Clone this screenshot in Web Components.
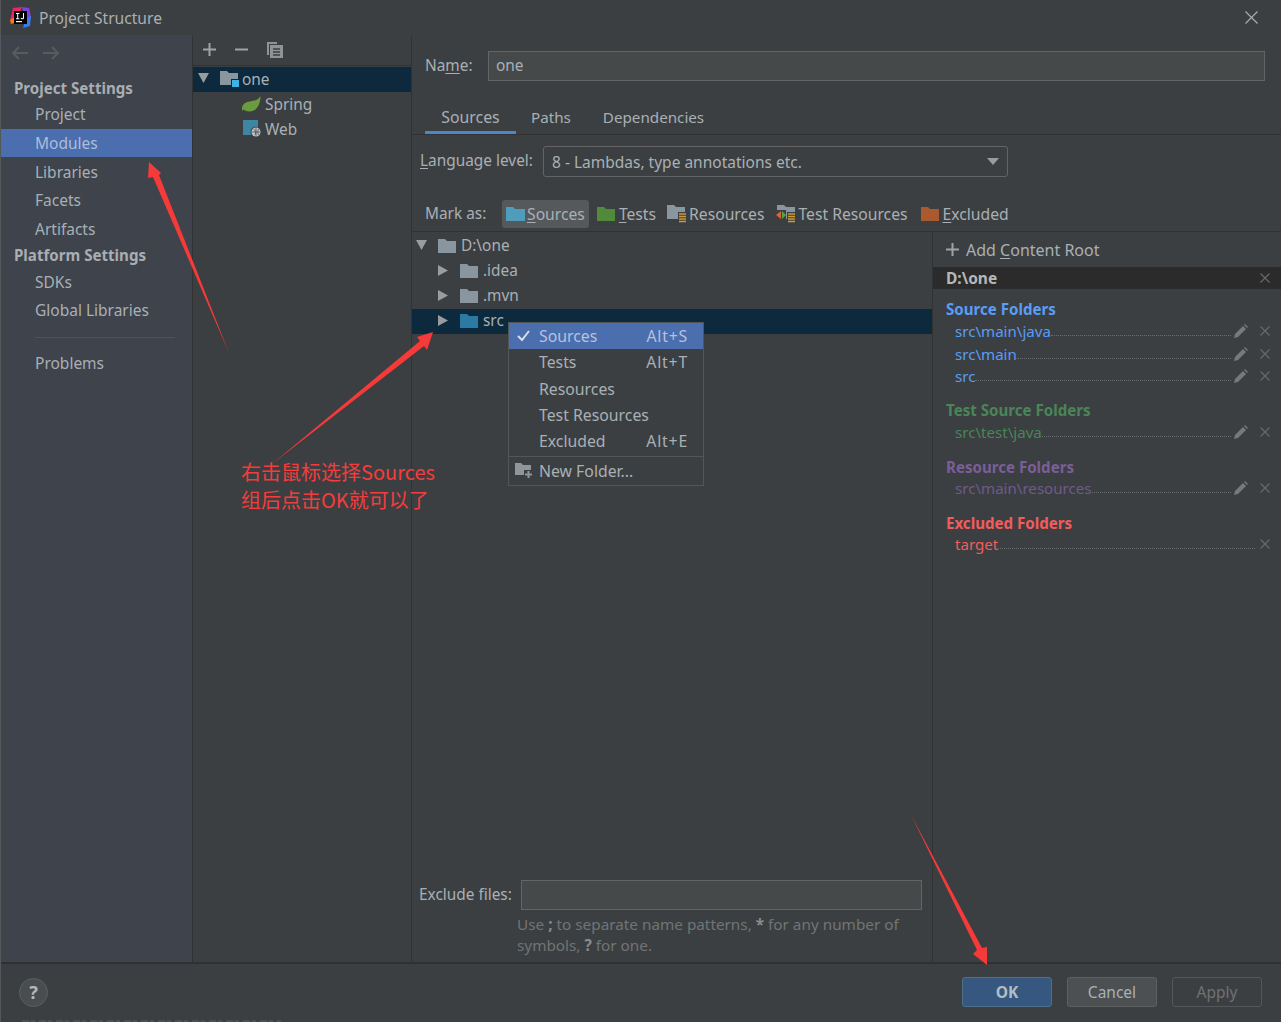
<!DOCTYPE html>
<html lang="zh"><head><meta charset="utf-8"><title>Project Structure</title>
<style>
html,body{margin:0;padding:0;background:#3c3f41;}
body{font-family:"Noto Sans","Noto Sans CJK SC",sans-serif;font-size:15.5px;color:#a9b0b5;overflow:hidden}
</style></head><body>
<ps-dialog>
  <ps-titlebar slot="title">Project Structure</ps-titlebar>

  <ps-sidebar slot="side">
    <ps-nav kind="head" style="padding-top:2px">Project Settings</ps-nav>
    <ps-nav h="29" style="padding-bottom:2px">Project</ps-nav>
    <ps-nav selected h="28">Modules</ps-nav>
    <ps-nav style="padding-top:1px">Libraries</ps-nav>
    <ps-nav>Facets</ps-nav>
    <ps-nav style="padding-top:1px">Artifacts</ps-nav>
    <ps-nav kind="head" h="25">Platform Settings</ps-nav>
    <ps-nav>SDKs</ps-nav>
    <ps-nav>Global Libraries</ps-nav>
    <ps-rule></ps-rule>
    <ps-nav style="padding-bottom:2px">Problems</ps-nav>
  </ps-sidebar>

  <ps-modules slot="modules">
    <ps-row indent="5" open selected icon="module" gap="3" lift="0">one</ps-row>
    <ps-row indent="49" icon="spring" gap="4" noarrow lift="0">Spring</ps-row>
    <ps-row indent="50" icon="web" gap="3" noarrow lift="0">Web</ps-row>
  </ps-modules>

  <ps-detail slot="detail">
    <ps-row slot="tree" indent="4" open icon="gray" lift="2">D:\one</ps-row>
    <ps-row slot="tree" indent="26" icon="gray" lift="2">.idea</ps-row>
    <ps-row slot="tree" indent="26" icon="gray" lift="2">.mvn</ps-row>
    <ps-row slot="tree" indent="26" selected icon="blue" lift="2">src</ps-row>

    <ps-group slot="roots" name="Source Folders" color="#589df6" top="9" pad="0">
      <ps-path editable color="#589df6">src\main\java</ps-path>
      <ps-path editable color="#589df6">src\main</ps-path>
      <ps-path editable color="#589df6">src</ps-path>
    </ps-group>
    <ps-group slot="roots" name="Test Source Folders" color="#4a8559" top="11" pad="0">
      <ps-path editable color="#4a8559">src\test\java</ps-path>
    </ps-group>
    <ps-group slot="roots" name="Resource Folders" color="#7a5e99" top="12" pad="2">
      <ps-path editable color="#6e5a8c">src\main\resources</ps-path>
    </ps-group>
    <ps-group slot="roots" name="Excluded Folders" color="#f25c5c" top="11" pad="2">
      <ps-path color="#f25c5c">target</ps-path>
    </ps-group>
  </ps-detail>

  <ps-footer slot="footer"></ps-footer>

  <ps-menu slot="overlay"></ps-menu>
  <ps-notes slot="overlay"></ps-notes>
</ps-dialog>

<script>
const ICONS = {
  gray:'<svg width="18" height="14" viewBox="0 0 18 14"><path d="M0 0h7l2 2h9v12H0z" fill="#8a969f"/></svg>',
  blue:'<svg width="18" height="14" viewBox="0 0 18 14"><path d="M0 0h7l2 2h9v12H0z" fill="#2a7aa3"/></svg>',
  module:'<svg width="19" height="16" viewBox="0 0 19 16"><path d="M0 0h7l2 2h9v12H0z" fill="#8a969f"/><rect x="11" y="8" width="8" height="8" fill="#0d293e"/><rect x="12" y="9" width="7" height="7" fill="#3cb4e6"/></svg>',
  spring:'<svg width="19" height="16" viewBox="0 0 19 16"><path d="M18.500 0C18.500 8 15 15.500 7.500 15.500 5 15.500 3 14.800 1.500 13.500L0 15 0 12.500C-.2 6 8 5.500 12.500 4.500 15 4 17 2.500 18.500 0z" fill="#6a9c3f"/></svg>',
  web:'<svg width="19" height="18" viewBox="0 0 19 18"><rect x="0" y="0" width="15" height="15" fill="#3f86a5"/><circle cx="13" cy="12" r="5.500" fill="#3c3f41"/><circle cx="13" cy="12" r="4.500" fill="#c4c8cb"/><path d="M9 12h8M13 8v8M10.500 9c2 2 3 4 1 6M15.500 9c-1 2-1 4 0 6" stroke="#4a4d50" stroke-width=".8" fill="none"/></svg>',
  sources:'<svg width="19" height="14" viewBox="0 0 19 14"><path d="M0 0h7l2 2h10v12H0z" fill="#4f9dbd"/></svg>',
  tests:'<svg width="18" height="14" viewBox="0 0 18 14"><path d="M0 0h7l2 2h9v12H0z" fill="#518a3a"/></svg>',
  resources:'<svg width="19" height="18" viewBox="0 0 19 18"><path d="M0 0h7l2 2h9v12H0z" fill="#8a969f"/><rect x="11" y="7" width="8" height="11" fill="#3c3f41"/><path d="M12 9h7M12 11.500h7M12 14h7M12 16.500h7" stroke="#c99b3c" stroke-width="1.500"/></svg>',
  testres:'<svg width="19" height="18" viewBox="0 0 19 18"><path d="M1 0h7l2 2h9v12H1z" fill="#8a969f"/><rect x="0" y="5" width="10" height="10" fill="#3c3f41"/><rect x="11" y="7" width="8" height="11" fill="#3c3f41"/><path d="M12 9h7M12 11.500h7M12 14h7M12 16.500h7" stroke="#c99b3c" stroke-width="1.500"/><path d="M5 6v8L0 10z" fill="#e2622c"/><path d="M6 6v8l4-4z" fill="#4ea84a"/></svg>',
  excluded:'<svg width="18" height="14" viewBox="0 0 18 14"><path d="M0 0h7l2 2h9v12H0z" fill="#aa5a2e"/></svg>',
  newfolder:'<svg width="18" height="16" viewBox="0 0 18 16"><path d="M0 0h6l2 2h8v10H0z" fill="#8f9599"/><rect x="9" y="7" width="9" height="9" fill="#3c3f41"/><path d="M13.500 8v7M10 11.500h7" stroke="#8f9599" stroke-width="2"/></svg>',
};
const X = '<svg width="10" height="10" viewBox="0 0 10 10"><path d="M.5.5l9 9M9.500.5l-9 9" stroke="#686b6e" stroke-width="1.100" fill="none"/></svg>';
const PEN = '<svg width="14" height="14" viewBox="0 0 14 14"><path d="M0 14l1-4 8-8 3 3-8 8z" fill="#777a7c"/><path d="M10 1l1-1 3 3-1 1z" fill="#777a7c"/></svg>';

function el(name, css, html, init){
  customElements.define(name, class extends HTMLElement{
    constructor(){
      super();
      const r=this.attachShadow({mode:'open'});
      const body = typeof html==='function' ? html(this) : html;
      r.innerHTML='<style>'+css+'</style>'+body;
    }
    connectedCallback(){ if(init) init(this); }
  });
}

el('ps-dialog',`
  :host{display:flex;flex-direction:column;position:relative;width:1281px;height:1022px;background:#3c3f41;overflow:hidden;box-sizing:border-box;border-left:1px solid #55585a}
  .main{display:flex;height:927px;flex:none}
  .side{width:191px;flex:none}
  .mods{width:218px;flex:none;border-left:1px solid #323232}
  .det{flex:1;min-width:0;border-left:1px solid #323232}
  ::slotted(ps-sidebar),::slotted(ps-modules),::slotted(ps-detail){height:100%}
  .foot{flex:1;border-top:2px solid #2f3133}
`,`
  <slot name="title"></slot>
  <div class="main">
    <div class="side"><slot name="side"></slot></div>
    <div class="mods"><slot name="modules"></slot></div>
    <div class="det"><slot name="detail"></slot></div>
  </div>
  <div class="foot"><slot name="footer"></slot></div>
  <slot name="overlay"></slot>
`);

el('ps-titlebar',`
  :host{display:flex;align-items:center;height:35px;flex:none;font-size:15.6px;color:#a9b0b5;padding-left:9px;box-sizing:border-box}
  .logo{margin-right:8px;display:block}
  .t{flex:1}
  .x{margin-right:23px;display:block}
`,`
  <svg class="logo" width="21" height="21" viewBox="0 0 21 21">
    <path d="M3 1L12 0 8 10 0 14z" fill="#f0226a"/><path d="M12 0l7 1 2 9-6 1z" fill="#7a45d8"/><path d="M21 9l-1 10-7 2 3-10z" fill="#3a7bf0"/><path d="M0 13l5-3 2 5-6 2z" fill="#f57a1c"/>
    <rect x="4" y="4" width="13" height="13" fill="#000"/>
    <path d="M6 6h3.400v1H8.200v4.200h1.200v1H6v-1h1.200V7H6zM14 6v4.800c0 1-.7 1.500-1.700 1.500s-1.600-.5-1.700-1.300l1-.3c.1.400.3.600.7.600s.7-.2.7-.7V6z" fill="#fff"/>
    <rect x="6" y="14" width="6" height="1.200" fill="#fff"/>
  </svg>
  <span class="t"><slot></slot></span>
  <svg class="x" width="13" height="13" viewBox="0 0 13 13"><path d="M.5.5l12 12M12.500.5l-12 12" stroke="#a9adb0" stroke-width="1.200"/></svg>
`);

el('ps-sidebar',`
  :host{display:block;background:#3e434c;box-sizing:border-box}
  .nav{display:flex;gap:13px;height:38px;align-items:center;padding-left:10px;padding-bottom:2px;box-sizing:border-box}
`,`
  <div class="nav">
    <svg width="18" height="14" viewBox="0 0 18 14"><path d="M17 7H2M8 1L2 7l6 6" stroke="#585c60" stroke-width="2" fill="none"/></svg>
    <svg width="18" height="14" viewBox="0 0 18 14"><path d="M1 7h15M10 1l6 6-6 6" stroke="#585c60" stroke-width="2" fill="none"/></svg>
  </div>
  <slot></slot>
`);

el('ps-nav',`
  :host{display:flex;align-items:center;height:28.500px;padding-left:34px;box-sizing:border-box;color:#a9b0b5;font-size:15.500px}
  :host([kind=head]){padding-left:13px;font-weight:700;color:#a9aeb2;height:27px;font-size:15.100px}
  :host([selected]){background:#4b6eaf;color:#adbdd8}
`,`<slot></slot>`,(e)=>{ if(e.hasAttribute('h')) e.style.height=e.getAttribute('h')+'px'; });

el('ps-rule',`:host{display:block;height:1px;background:#4f5358;margin:12px 17px 12px 34px}`,``);

el('ps-row',`
  :host{display:flex;align-items:center;height:25px;box-sizing:border-box;color:#a9b0b5;font-size:15.400px;white-space:nowrap}
  :host([selected]){background:#0d293e}
  .arrow{width:11px;height:11px;flex:none;margin-right:11px;display:block;margin-top:-2px}
  .icon{display:flex;flex:none;margin-top:-1px}
  .l{margin-left:var(--g,5px);padding-bottom:var(--lift,2px)}
`,(e)=>{
  const open=e.hasAttribute('open'), no=e.hasAttribute('noarrow');
  const arrow=no?'':`<svg class="arrow" viewBox="0 0 11 11"><path d="${open?'M0 0h11L5.500 10z':'M0 0l10 5.500L0 11z'}" fill="#9a9d9f"/></svg>`;
  return arrow+`<span class="icon">${ICONS[e.getAttribute('icon')]||''}</span><span class="l"><slot></slot></span>`;
},(e)=>{
  e.style.paddingLeft=(e.getAttribute('indent')||0)+'px';
  if(e.hasAttribute('gap')) e.style.setProperty('--g',e.getAttribute('gap')+'px');
  if(e.hasAttribute('lift')) e.style.setProperty('--lift',e.getAttribute('lift')+'px');
});

el('ps-modules',`
  :host{display:block;box-sizing:border-box}
  .bar{display:flex;align-items:center;gap:19px;height:31px;padding-left:10px;padding-bottom:1px;border-bottom:1px solid #323232;box-sizing:border-box;margin-bottom:1px}
`,`
  <div class="bar">
    <svg width="13" height="13" viewBox="0 0 13 13"><path d="M6.500 0v13M0 6.500h13" stroke="#a0a3a5" stroke-width="2"/></svg>
    <svg width="13" height="13" viewBox="0 0 13 13"><path d="M0 6.500h13" stroke="#a0a3a5" stroke-width="2"/></svg>
    <svg width="16" height="16" viewBox="0 0 16 16"><path d="M0 0h10v2H2v11H0z" fill="#8f9396"/><rect x="3" y="3" width="13" height="13" fill="#8f9396"/><path d="M6 7h7M6 10h7M6 13h7" stroke="#3c3f41" stroke-width="1.400"/></svg>
  </div>
  <slot></slot>
`);

el('ps-detail',`
  :host{display:flex;flex-direction:column;box-sizing:border-box;font-size:15.400px;color:#a9b0b5}
  u{text-decoration:underline;text-underline-offset:2px}
  .name{display:flex;align-items:center;height:30px;margin-top:16px;padding:0 16px 0 13px;flex:none}
  .name span{width:63px;padding-bottom:1px}
  .input{flex:1;height:30px;background:#45494a;border:1px solid #646464;box-sizing:border-box;display:flex;align-items:center;padding:0 0 1px 7px;color:#a9b0b5}
  .tabs{display:flex;height:31px;margin-top:23px;border-bottom:1px solid #323232;padding-left:13px;flex:none;box-sizing:border-box;font-size:15.200px}
  .tab{display:flex;align-items:center;padding:0 0 4px 0;box-sizing:border-box;height:30px;margin-left:32px}
  .tab.on{border-bottom:3px solid #4a88c7;width:91px;padding:0 0 1px 0;justify-content:center;margin-left:0;font-size:15.800px}
  .tab.on + .tab{margin-left:15px}
  .lang{display:flex;align-items:center;height:31px;margin-top:11px;padding-left:8px;flex:none}
  .lang>span{width:123px;padding-bottom:2px}
  .combo{width:465px;height:31px;box-sizing:border-box;background:#3c3f41;border:1px solid #646464;border-radius:3px;display:flex;align-items:center;justify-content:space-between;padding:0 8px;color:#a9b0b5;font-size:15.500px}
  .combo svg{display:block}
  .mark{display:flex;align-items:center;height:36px;margin-top:19px;padding-left:13px;flex:none;border-bottom:1px solid #323232;box-sizing:border-box;font-size:15.700px}
  .mark .lbl{width:77px;padding-bottom:1px;font-size:15.400px}
  .m{display:flex;align-items:center;gap:3px;height:28px;box-sizing:border-box;white-space:nowrap}
  .m svg{display:block}
  .m.on{background:#55595c;border-radius:3px;padding:0 4px;margin-right:8px;gap:2px}
  .m.four{gap:4px}
  .m.r11{margin-right:11px}
  .m.r12{margin-right:12px}
  .m.r13{margin-right:13px}
  .low{flex:1;display:flex;min-height:0}
  .left{flex:1;display:flex;flex-direction:column;min-width:0}
  .tree{flex:1;padding-top:2px}
  .ex{display:flex;align-items:center;padding-left:7px;height:30px;flex:none}
  .ex span{width:102px;padding-bottom:2px}
  .ex .input{flex:none;width:401px;height:30px}
  .hint{color:#717476;padding:4px 0 7px 105px;height:41px;flex:none;font-size:15.300px}
  .hint div{display:flex;height:21px;line-height:21px;white-space:pre}
  .hint b{color:#8a8d8f;margin:0 4px}
  .right{width:348px;flex:none;border-left:1px solid #323232;display:flex;flex-direction:column}
  .add{display:flex;align-items:center;height:35px;padding-left:13px;gap:7px;flex:none;font-size:16px}
  .rootname{height:22px;background:#2b2b2b;display:flex;align-items:center;justify-content:space-between;padding:0 11px 0 13px;font-weight:700;color:#b5b7b9;flex:none;font-size:15.500px}
  .rootname svg{display:block}
`,`
  <div class="name"><span>Na<u>m</u>e:</span><div class="input">one</div></div>
  <div class="tabs"><div class="tab on">Sources</div><div class="tab">Paths</div><div class="tab">Dependencies</div></div>
  <div class="lang"><span><u>L</u>anguage level:</span><div class="combo">8 - Lambdas, type annotations etc.<svg width="12" height="7" viewBox="0 0 12 7"><path d="M0 0h12L6 7z" fill="#9a9d9f"/></svg></div></div>
  <div class="mark"><span class="lbl">Mark as:</span>
    <div class="m on">${ICONS.sources}<span><u>S</u>ources</span></div>
    <div class="m four r11">${ICONS.tests}<span><u>T</u>ests</span></div>
    <div class="m r12">${ICONS.resources}<span>Resources</span></div>
    <div class="m r13">${ICONS.testres}<span>Test Resources</span></div>
    <div class="m four">${ICONS.excluded}<span><u>E</u>xcluded</span></div>
  </div>
  <div class="low">
    <div class="left">
      <div class="tree"><slot name="tree"></slot></div>
      <div class="ex"><span>Exclude files:</span><div class="input"></div></div>
      <div class="hint">
        <div><span>Use</span><b>;</b><span>to separate name patterns,</span><b>*</b><span>for any number of</span></div>
        <div><span>symbols,</span><b>?</b><span>for one.</span></div>
      </div>
    </div>
    <div class="right">
      <div class="add"><svg width="13" height="13" viewBox="0 0 13 13"><path d="M6.500 0v13M0 6.500h13" stroke="#a0a3a5" stroke-width="2"/></svg><span>Add <u>C</u>ontent Root</span></div>
      <div class="rootname"><span>D:\\one</span>${X}</div>
      <slot name="roots"></slot>
    </div>
  </div>
`);

el('ps-group',`
  :host{display:block}
  .h{font-weight:700;height:22px;display:flex;align-items:center;padding-left:13px;box-sizing:border-box;font-size:15.100px}
`,(e)=>`<div class="h" style="color:${e.getAttribute('color')};padding-top:${e.getAttribute('pad')||0}px">${e.getAttribute('name')}</div><slot></slot>`,
(e)=>{ e.style.marginTop=e.getAttribute('top')+'px'; });

el('ps-path',`
  :host{display:flex;align-items:center;height:22.500px;padding-left:22px;padding-right:11px;box-sizing:border-box;white-space:nowrap;font-size:15.100px}
  .dots{flex:1;border-bottom:1px dotted #6a6d70;height:0;margin-top:9px;min-width:0}
  .pen{display:flex;margin-left:3px;margin-right:7px}
  .x{display:flex;margin-left:5px}
`,(e)=>`<span style="color:${e.getAttribute('color')}"><slot></slot></span><span class="dots"></span>${e.hasAttribute('editable')?`<span class="pen">${PEN}</span>`:''}<span class="x">${X}</span>`);

el('ps-footer',`
  :host{display:flex;align-items:center;height:100%;box-sizing:border-box;padding:0 19px 2px 18px;position:relative;font-size:15.500px}
  .help{width:29px;height:29px;border-radius:50%;background:#4a4d4f;border:1px solid #5c5f61;box-sizing:border-box;display:flex;align-items:center;justify-content:center;font-weight:700;font-size:18px;color:#b4b7b9;margin-right:auto}
  .b{width:90px;height:30px;box-sizing:border-box;border-radius:3px;display:flex;align-items:center;justify-content:center;margin-left:15px;border:1px solid #5e6060;background:#4c5052;color:#a9b0b5}
  .ok{background:#365880;border-color:#4c708c;font-weight:700;color:#b3bdc6}
  .ap{background:#3c3f41;border-color:#54575a;color:#6f7274}
  .clip{position:absolute;left:21px;bottom:0;width:259px;height:2px;background:repeating-linear-gradient(90deg,#6a6d6f 0 7px,#45484a 7px 9px,#6a6d6f 9px 13px,#3c3f41 13px 17px);opacity:.35}
`,`<div class="help">?</div><div class="b ok">OK</div><div class="b">Cancel</div><div class="b ap">Apply</div><div class="clip"></div>`);

el('ps-menu',`
  :host{position:absolute;left:507px;top:322px;width:196px;height:164px;box-sizing:border-box;background:#3c3f41;border:1px solid #515658;display:block;font-size:15.800px;color:#a9b0b5}
  .i{display:flex;align-items:center;height:26.300px;padding-left:30px;padding-right:15px;justify-content:space-between;position:relative;white-space:nowrap}
  .i .k{letter-spacing:.8px}
  .on{background:#4b6eaf;color:#b4c2dc}
  .ck{position:absolute;left:8px;top:7px}
  .ic{position:absolute;left:6px;top:6px;display:flex}
  .sep{height:1px;background:#515658;margin-top:1.500px}
  .i.nf{height:28px}
`,`
  <div class="i on"><svg class="ck" width="13" height="12" viewBox="0 0 13 12"><path d="M1 6l4 4 7-9" stroke="#d9dfe8" stroke-width="2" fill="none"/></svg><span>Sources</span><span class="k">Alt+S</span></div>
  <div class="i"><span>Tests</span><span class="k">Alt+T</span></div>
  <div class="i"><span>Resources</span></div>
  <div class="i"><span>Test Resources</span></div>
  <div class="i"><span>Excluded</span><span class="k">Alt+E</span></div>
  <div class="sep"></div>
  <div class="i nf"><span class="ic">${ICONS.newfolder}</span><span>New Folder...</span></div>
`);

el('ps-notes',`
  :host{position:absolute;left:-1px;top:0;width:1281px;height:1022px;display:block;pointer-events:none}
  svg{position:absolute;left:0;top:0}
  .t{position:absolute;left:241px;top:458px;color:#f53c3c;font:20px/28px "Noto Sans CJK SC","Noto Sans",sans-serif;white-space:nowrap}
`,`
  <svg width="1281" height="1022" viewBox="0 0 1281 1022">
    <g fill="#f63a3a">
      <path d="M229 353L159 175 161 173 149 162 148 178 153 177z"/>
      <path d="M272 464L420 341 417 337 433 332 427 350 424 346z"/>
      <path d="M911 815L977 950 973 954 987 965 987 947 982 948z"/>
    </g>
  </svg>
  <div class="t">右击鼠标选择Sources<br>组后点击OK就可以了</div>
`);
</script>
</body></html>
